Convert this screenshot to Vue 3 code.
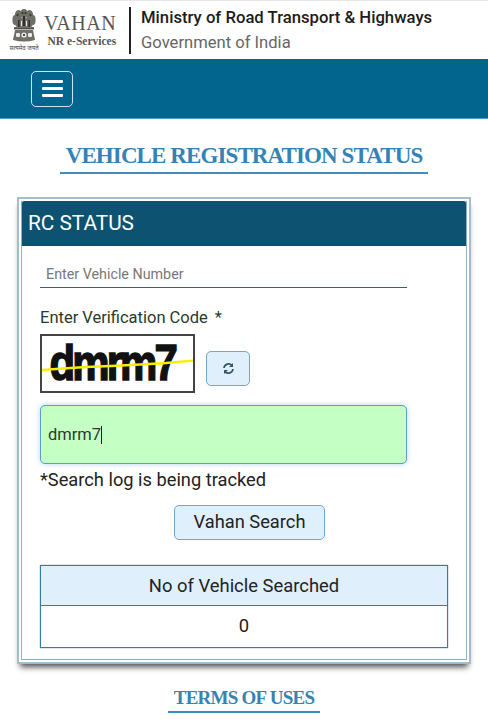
<script setup>
const title = 'VEHICLE REGISTRATION STATUS'
const count = 0
</script>

<template>
  <div class="page">
    <header class="top">
      <div class="logo">
        <svg class="emblem" width="34" height="42" viewBox="0 0 34 42" aria-hidden="true">
          <g fill="#6f6f68">
            <ellipse cx="17" cy="4.5" rx="3.6" ry="4.5" />
            <ellipse cx="11.5" cy="6" rx="3.6" ry="5" />
            <ellipse cx="22.5" cy="6" rx="3.6" ry="5" />
            <ellipse cx="8" cy="11" rx="2.6" ry="5" />
            <ellipse cx="26" cy="11" rx="2.6" ry="5" />
            <rect x="8.5" y="9" width="17" height="9" rx="2" />
            <rect x="7" y="18.5" width="20" height="2" />
            <path d="M8 21 H26 L28 31 Q17 34 6 31 Z" />
          </g>
          <g fill="#2e2e2a">
            <circle cx="15.5" cy="4" r="1" />
            <circle cx="18.5" cy="4" r="1" />
            <circle cx="10.5" cy="6" r="1" />
            <circle cx="23.5" cy="6" r="1" />
            <rect x="16" y="7" width="2" height="10" />
            <rect x="11" y="11" width="1.5" height="7" />
            <rect x="21.5" y="11" width="1.5" height="7" />
            <rect x="7" y="18.5" width="20" height="1" />
          </g>
          <g fill="#e8e8e4">
            <circle cx="17" cy="26" r="2.6" />
            <rect x="9" y="24" width="4" height="4" rx="1" />
            <rect x="21" y="24" width="4" height="4" rx="1" />
            <rect x="14" y="12" width="1" height="5" />
            <rect x="19" y="12" width="1" height="5" />
          </g>
          <circle cx="17" cy="26" r="1.1" fill="#2e2e2a" />
          <text x="17" y="40.5" text-anchor="middle" class="motto">सत्यमेव जयते</text>
        </svg>
        <div class="brand">
          <div class="brand-name">VAHAN</div>
          <div class="brand-sub">NR e-Services</div>
        </div>
      </div>
      <div class="ministry">
        <div class="ministry-name">Ministry of Road Transport &amp; Highways</div>
        <div class="ministry-sub">Government of India</div>
      </div>
    </header>

    <nav class="navbar">
      <button class="toggler" aria-label="Menu">
        <span></span><span></span><span></span>
      </button>
    </nav>

    <main class="main">
      <div class="heading"><h1>{{ title }}</h1></div>

      <section class="panel">
        <div class="panel-inner">
          <div class="panel-head">RC STATUS</div>
          <div class="panel-body">
            <div class="vehicle-field">Enter Vehicle Number</div>
            <label class="code-label">Enter Verification Code<span class="star">*</span></label>
            <div class="captcha-row">
              <div class="captcha">
                <span class="captcha-text">dmrm7</span>
                <svg class="captcha-line" width="153" height="58" viewBox="0 0 153 58" aria-hidden="true">
                  <path d="M0 35 L22 33.5 L45 32 L70 31 L90 30 L108 29 L125 28 L153 25.5" fill="none" stroke="#f5f000" stroke-width="2.4" />
                </svg>
              </div>
              <button class="refresh" aria-label="Refresh">
                <svg width="13" height="13" viewBox="0 0 13 13" aria-hidden="true">
                  <path d="M2 6 A4.6 4.6 0 0 1 10 3.4 M11 7 A4.6 4.6 0 0 1 3 9.6" fill="none" stroke="#35566a" stroke-width="1.7" />
                  <path d="M11 1 V5 H7 Z M2 12 V8 H6 Z" fill="#35566a" />
                </svg>
              </button>
            </div>
            <div class="code-input"><span>dmrm7</span><i class="caret"></i></div>
            <p class="note">*Search log is being tracked</p>
            <div class="search-row"><button class="search">Vahan Search</button></div>
            <div class="count-table">
              <div class="count-head">No of Vehicle Searched</div>
              <div class="count-value">{{ count }}</div>
            </div>
          </div>
        </div>
      </section>

      <div class="terms"><h2>TERMS OF USES</h2></div>
    </main>
  </div>
</template>

<style>
html, body { margin: 0; background: #fff; }
</style>

<style scoped>
.page { width: 488px; height: 721px; overflow: hidden; background: #fff; font-family: Roboto, "Liberation Sans", sans-serif; color: #222; }
.top { box-sizing: border-box; height: 59px; border-top: 1px solid #e6e6e6; display: flex; align-items: center; padding-left: 7px; }
.logo { display: flex; align-items: center; box-sizing: border-box; height: 48px; width: 122px; flex: none; gap: 3px; }
.emblem { flex: none; }
.motto { font-family: "Noto Sans", sans-serif; font-size: 6px; fill: #444; }
.brand { font-family: "Liberation Serif", serif; color: #555; text-align: right; }
.brand-name { font-size: 20px; line-height: 22px; letter-spacing: 0.5px; }
.brand-sub { font-size: 11.5px; line-height: 14px; font-weight: 700; }
.ministry { border-left: 2px solid #222; height: 47px; padding-left: 10px; display: flex; flex-direction: column; justify-content: center; }
.ministry-name { font-size: 16.7px; font-weight: 500; line-height: 25px; color: #1c1c1c; }
.ministry-sub { font-size: 16.6px; line-height: 25px; color: #666; }
.navbar { height: 60px; box-sizing: border-box; background: #02658e; display: flex; align-items: center; padding-left: 31px; border-bottom: 1px solid #4b9cc4; }
.toggler { width: 42px; height: 36px; box-sizing: border-box; border: 1px solid #cfe3ee; border-radius: 5px; background: transparent; padding: 0; display: flex; flex-direction: column; align-items: center; justify-content: center; gap: 4px; }
.toggler span { width: 21px; height: 3px; background: #fff; border-radius: 1px; }
.main { display: flex; flex-direction: column; align-items: center; }
.heading { margin-top: 23px; }
.heading h1 { margin: 0; padding: 0 6px 2px; border-bottom: 2px solid #3d8dbf; font-family: "Liberation Serif", serif; font-size: 23px; line-height: 28px; font-weight: 700; letter-spacing: -0.9px; color: #3383b5; }
.panel { box-sizing: border-box; width: 454px; height: 467px; margin-top: 23px; border: 2px solid #a3bdcc; padding: 2px; box-shadow: 0 6px 6px -3px rgba(0, 0, 0, 0.7); background: #fff; }
.panel-inner { box-sizing: border-box; height: 100%; border: 1px solid #8fb0c3; border-top: none; }
.panel-head { height: 45px; background: #0d5270; color: #fff; font-size: 20.8px; line-height: 44px; padding-left: 6px; border-radius: 2px 2px 0 0; }
.panel-body { padding: 0 18px; }
.vehicle-field { width: 367px; box-sizing: border-box; height: 42px; padding: 18px 0 0 6px; border-bottom: 1px solid #32607c; font-size: 14.3px; line-height: 20px; color: #777; }
.code-label { display: block; margin-top: 20px; font-size: 16.5px; line-height: 20px; color: #2a3a2c; }
.star { margin-left: 7px; }
.captcha-row { display: flex; align-items: flex-end; margin-top: 6px; }
.captcha { position: relative; box-sizing: border-box; width: 155px; height: 59px; border: 2px solid #444; overflow: hidden; background: #fff; }
.captcha-text { display: block; font-family: "Liberation Sans", sans-serif; font-weight: 700; font-size: 50px; line-height: 54px; letter-spacing: -3.5px; color: #111; padding-left: 9px; -webkit-text-stroke: 1.5px #111; transform: scaleX(0.84); transform-origin: 0 0; white-space: nowrap; }
.captcha-line { position: absolute; left: -1px; top: -1px; }
.refresh { box-sizing: border-box; width: 44px; height: 35px; margin-left: 11px; margin-bottom: 7px; background: #e0effc; border: 1px solid #6fa8cc; border-radius: 5px; padding: 0; display: flex; align-items: center; justify-content: center; }
.code-input { box-sizing: border-box; width: 367px; height: 59px; margin-top: 12px; background: #c4ffc4; border: 1px solid #58a0c4; border-radius: 5px; box-shadow: 0 0 5px rgba(100, 170, 230, 0.5); display: flex; align-items: center; padding-left: 7px; font-size: 16.5px; color: #2c3a2c; }
.caret { display: inline-block; width: 1px; height: 18px; background: #222; }
.note { margin: 4px 0 0; font-size: 18.25px; line-height: 24px; color: #222; }
.search-row { display: flex; justify-content: center; margin-top: 13px; width: 419px; }
.search { box-sizing: border-box; width: 151px; height: 35px; padding: 0 0 2px; background: #e0effc; border: 1px solid #6fa8cc; border-radius: 5px; font-family: inherit; font-size: 18.3px; color: #222; }
.count-table { box-sizing: border-box; width: 408px; margin-top: 25px; border: 1px solid #2f7fa5; box-shadow: 0 0 1px #2f7fa5; }
.count-head { height: 40px; box-sizing: border-box; background: #e0effc; border-bottom: 1px solid #2f7fa5; text-align: center; font-size: 18.4px; line-height: 39px; color: #222; }
.count-value { height: 41px; text-align: center; font-size: 18.4px; line-height: 40px; color: #222; }
.terms { margin-top: 21px; }
.terms h2 { margin: 0; padding: 1px 6px 1px; border-bottom: 2px solid #3d8dbf; font-family: "Liberation Serif", serif; font-size: 19px; line-height: 24px; font-weight: 700; letter-spacing: -0.75px; color: #3383b5; }
</style>
